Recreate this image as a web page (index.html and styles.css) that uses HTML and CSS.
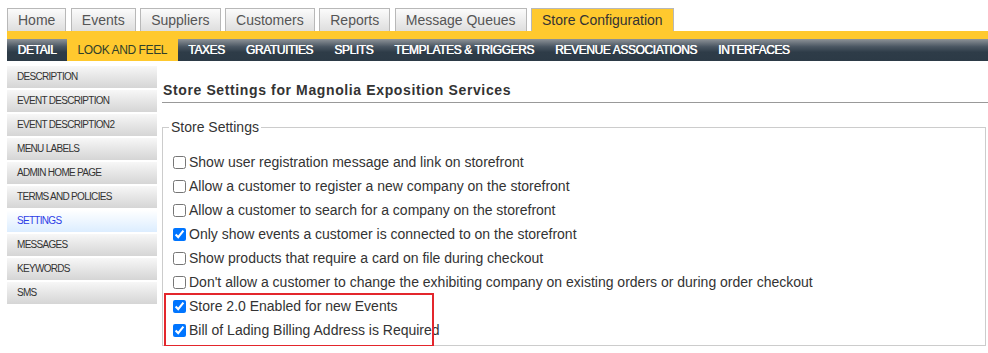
FILE: index.html
```html
<!DOCTYPE html>
<html>
<head>
<meta charset="utf-8">
<link rel="stylesheet" href="styles.css">
</head>
<body>
<div class="page">
  <div class="tabs">
    <div class="tab">Home</div>
    <div class="tab">Events</div>
    <div class="tab">Suppliers</div>
    <div class="tab">Customers</div>
    <div class="tab">Reports</div>
    <div class="tab">Message Queues</div>
    <div class="tab active">Store Configuration</div>
  </div>
  <div class="ybar"></div>
  <div class="subnav">
    <div class="sub">DETAIL</div>
    <div class="sub active">LOOK AND FEEL</div>
    <div class="sub">TAXES</div>
    <div class="sub">GRATUITIES</div>
    <div class="sub">SPLITS</div>
    <div class="sub">TEMPLATES &amp; TRIGGERS</div>
    <div class="sub">REVENUE ASSOCIATIONS</div>
    <div class="sub">INTERFACES</div>
  </div>
  <div class="body">
    <div class="side">
      <div class="item">DESCRIPTION</div>
      <div class="item">EVENT DESCRIPTION</div>
      <div class="item">EVENT DESCRIPTION2</div>
      <div class="item">MENU LABELS</div>
      <div class="item">ADMIN HOME PAGE</div>
      <div class="item">TERMS AND POLICIES</div>
      <div class="item active">SETTINGS</div>
      <div class="item">MESSAGES</div>
      <div class="item">KEYWORDS</div>
      <div class="item">SMS</div>
    </div>
    <div class="main">
      <h1 class="title">Store Settings for Magnolia Exposition Services</h1>
      <fieldset class="fs">
        <legend>Store Settings</legend>
        <div class="rows">
          <label class="row"><input type="checkbox">Show user registration message and link on storefront</label>
          <label class="row"><input type="checkbox">Allow a customer to register a new company on the storefront</label>
          <label class="row"><input type="checkbox">Allow a customer to search for a company on the storefront</label>
          <label class="row"><input type="checkbox" checked>Only show events a customer is connected to on the storefront</label>
          <label class="row"><input type="checkbox">Show products that require a card on file during checkout</label>
          <label class="row"><input type="checkbox">Don't allow a customer to change the exhibiting company on existing orders or during order checkout</label>
          <div class="highlight">
            <label class="row"><input type="checkbox" checked>Store 2.0 Enabled for new Events</label>
            <label class="row"><input type="checkbox" checked>Bill of Lading Billing Address is Required</label>
          </div>
        </div>
      </fieldset>
    </div>
  </div>
</div>
</body>
</html>
```
FILE: styles.css
```css
html, body {
  margin: 0;
  padding: 0;
  background: #fff;
}
body {
  font-family: "Liberation Sans", Arial, sans-serif;
  color: #333;
  overflow: hidden;
}
.page {
  padding: 8px 0 0 7px;
}
.tabs {
  display: flex;
  gap: 4.5px;
  height: 23px;
}
.tab {
  box-sizing: border-box;
  height: 23px;
  padding: 0 10px;
  border: 1px solid #b8b8b8;
  border-bottom: none;
  background: linear-gradient(#fbfbfb, #dedede);
  color: #555;
  font-size: 14px;
  line-height: 22px;
}
.tab.active {
  background: #ffc92e;
  color: #333;
}
.ybar {
  height: 8px;
  background: #ffc92e;
}
.subnav {
  display: flex;
  height: 22px;
  background: linear-gradient(#8e9398 0, #4a5662 35%, #2e3c48 60%, #2c3a46 100%);
}
.sub {
  padding: 0 10.6px;
  font-size: 12px;
  letter-spacing: -0.4px;
  line-height: 22px;
  color: #fff;
  text-shadow: 0.4px 0 0 #fff;
}
.sub.active {
  background: #ffc92e;
  color: #2f3f2a;
  text-shadow: none;
}
.body {
  display: flex;
  gap: 5px;
  padding-top: 5px;
}
.side {
  width: 150px;
  flex: none;
}
.item {
  height: 22px;
  margin-bottom: 2px;
  padding-left: 10px;
  background: linear-gradient(#f7f7f7, #d5d5d5);
  font-size: 10px;
  letter-spacing: -0.7px;
  line-height: 22px;
  color: #333;
}
.item.active {
  background: linear-gradient(#ffffff, #dcedff);
  color: #2e3de6;
}
.main {
  flex: 1;
  min-width: 0;
}
.title {
  margin: 0;
  padding: 16px 0 4px 1px;
  border-bottom: 1px solid #999;
  font-size: 14px;
  font-weight: bold;
  letter-spacing: 0.62px;
  line-height: 16px;
  color: #333;
}
.fs {
  margin: 16px 2px 0 0;
  padding: 0 6px 3px 6px;
  border: 1px solid #ccc;
}
.fs legend {
  padding: 0 2px;
  font-size: 14px;
  line-height: 16px;
  color: #333;
}
.rows {
  padding-top: 15px;
}
.row {
  display: flex;
  align-items: center;
  height: 24px;
  font-size: 14px;
  color: #333;
}
.row input {
  width: 13px;
  height: 13px;
  margin: 0 3px 0 4px;
}
.highlight {
  position: relative;
}
.highlight::after {
  content: "";
  position: absolute;
  left: -5px;
  top: -1px;
  box-sizing: border-box;
  width: 270px;
  height: 54px;
  border: 2px solid #e3262c;
  pointer-events: none;
}
```
